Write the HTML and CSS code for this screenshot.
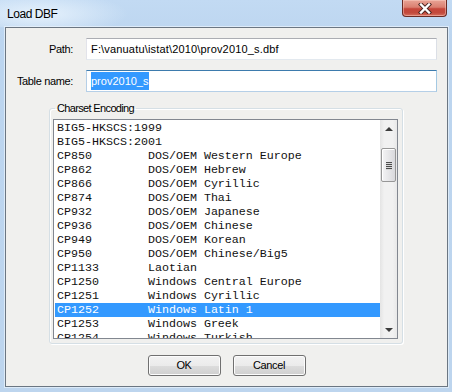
FILE: index.html
```html
<!DOCTYPE html>
<html lang="en">
    <head>
        <meta charset="UTF-8" />
        <title>Load DBF</title>
        <link rel="stylesheet" href="styles.css">
    </head>
    <body>
        <div class="window">
            <div class="titlebar">
                <span class="title">Load DBF</span>
                <div class="close-btn">
                    <svg width="14" height="11" viewBox="0 0 14 11">
                        <path d="M3 1.5 L11 9.5 M11 1.5 L3 9.5" stroke="#4a2420" stroke-width="4.2" stroke-linecap="square" fill="none"/>
                        <path d="M3 1.5 L11 9.5 M11 1.5 L3 9.5" stroke="#ffffff" stroke-width="2.4" stroke-linecap="square" fill="none"/>
                    </svg>
                </div>
            </div>

            <div class="client">
                <div class="form-row">
                    <label class="field-label">Path:</label>
                    <div class="textbox path-text">F:\vanuatu\istat\2010\prov2010_s.dbf</div>
                </div>
                <div class="form-row">
                    <label class="field-label">Table name:</label>
                    <div class="textbox focused"><span class="selected">prov2010_s</span></div>
                </div>

                <fieldset class="group">
                    <legend>Charset Encoding</legend>
                    <div class="listbox">
                        <div class="list-items">
                            <div class="item"><span class="code">BIG5-HKSCS:1999</span></div>
                            <div class="item"><span class="code">BIG5-HKSCS:2001</span></div>
                            <div class="item"><span class="code">CP850</span>DOS/OEM Western Europe</div>
                            <div class="item"><span class="code">CP862</span>DOS/OEM Hebrew</div>
                            <div class="item"><span class="code">CP866</span>DOS/OEM Cyrillic</div>
                            <div class="item"><span class="code">CP874</span>DOS/OEM Thai</div>
                            <div class="item"><span class="code">CP932</span>DOS/OEM Japanese</div>
                            <div class="item"><span class="code">CP936</span>DOS/OEM Chinese</div>
                            <div class="item"><span class="code">CP949</span>DOS/OEM Korean</div>
                            <div class="item"><span class="code">CP950</span>DOS/OEM Chinese/Big5</div>
                            <div class="item"><span class="code">CP1133</span>Laotian</div>
                            <div class="item"><span class="code">CP1250</span>Windows Central Europe</div>
                            <div class="item"><span class="code">CP1251</span>Windows Cyrillic</div>
                            <div class="item active"><span class="code">CP1252</span>Windows Latin 1</div>
                            <div class="item"><span class="code">CP1253</span>Windows Greek</div>
                            <div class="item"><span class="code">CP1254</span>Windows Turkish</div>
                        </div>
                        <div class="scrollbar">
                            <div class="scroll-btn"><span class="arrow-up"></span></div>
                            <div class="scroll-gap"></div>
                            <div class="thumb">
                                <span class="grip"></span>
                                <span class="grip"></span>
                                <span class="grip"></span>
                                <span class="grip"></span>
                            </div>
                            <div class="scroll-rest"></div>
                            <div class="scroll-btn"><span class="arrow-down"></span></div>
                        </div>
                    </div>
                </fieldset>

                <div class="buttons">
                    <div class="btn">OK</div>
                    <div class="btn">Cancel</div>
                </div>
            </div>
        </div>
    </body>
</html>
```

FILE: styles.css
```css
html,
body {
    margin: 0;
    padding: 0;
}

body {
    font-family: 'Liberation Sans', Arial, sans-serif;
    font-size: 11px;
    color: #000;
}

.window {
    width: 452px;
    height: 392px;
    box-sizing: border-box;
    display: flex;
    flex-direction: column;
    background: linear-gradient(to bottom, #c2daf3, #bcd5ef 40px, #bdd5ee);
}

.titlebar {
    height: 27px;
    display: flex;
    align-items: flex-start;
    background: radial-gradient(ellipse 90px 22px at 38px 14px, rgba(232, 243, 253, 0.95), rgba(232, 243, 253, 0));
}

.title {
    font-size: 12px;
    letter-spacing: -0.45px;
    padding: 7px 0 0 7px;
    line-height: 14px;
}

.close-btn {
    margin-left: auto;
    margin-right: 5px;
    width: 45px;
    height: 17px;
    box-sizing: border-box;
    border: 1px solid #6a2b24;
    border-top: none;
    border-radius: 0 0 4px 4px;
    background: linear-gradient(to bottom, #e9a496 0%, #da7f70 45%, #c6463a 55%, #c24a3c 80%, #d8715f 100%);
    box-shadow: inset 0 0 0 1px rgba(255, 215, 205, 0.45);
    display: flex;
    align-items: center;
    justify-content: center;
}

.client {
    flex: 1;
    margin: 0 4px 5px 5px;
    border: 1px solid #6b7682;
    background: #f0f0ee;
    display: flex;
    flex-direction: column;
    padding-top: 10px;
    box-shadow: 0 0 0 1px rgba(235, 243, 252, 0.7);
}

.form-row {
    display: flex;
    align-items: center;
    height: 22px;
    margin-bottom: 10px;
    padding-right: 10px;
}

.field-label {
    width: 67px;
    margin-right: 13px;
    text-align: right;
    letter-spacing: -0.35px;
}

.textbox {
    flex: 1;
    height: 22px;
    box-sizing: border-box;
    border: 1px solid;
    border-color: #abadb3 #dbdfe6 #e3e9ef #e2e3ea;
    background: #fff;
    padding: 0 4px;
    line-height: 20px;
    white-space: nowrap;
}

.path-text {
    letter-spacing: 0.17px;
}

.textbox.focused {
    border-color: #3d7bad #a4c9e3 #b5cfe7 #b5cfe7;
}

.selected {
    display: inline-block;
    background: #3399ff;
    color: #fff;
    line-height: 18px;
    vertical-align: top;
    margin-top: 1px;
}

.group {
    margin: -1px 0 0 43px;
    width: 354px;
    box-sizing: border-box;
    min-width: 0;
    border: 1px solid #d5dfe5;
    border-radius: 3px;
    padding: 4px 4px 4px 3px;
    box-shadow: 1px 1px 0 #fff, inset 1px 1px 0 #fff;
}

.group legend {
    padding: 0 2px;
    margin-left: 2px;
    line-height: 14px;
    letter-spacing: -0.65px;
}

.listbox {
    height: 220px;
    box-sizing: border-box;
    border: 1px solid #828790;
    background: #fff;
    display: flex;
}

.list-items {
    flex: 1;
    overflow: hidden;
    padding: 1px 0 0 1px;
    font-family: 'Liberation Mono', 'Courier New', monospace;
    font-size: 11.67px;
    color: #111;
}

.item {
    height: 14px;
    line-height: 14px;
    padding-left: 2px;
    white-space: pre;
}

.item.active {
    background: #3399ff;
    color: #fff;
}

.code {
    display: inline-block;
    width: 13ch;
}

.scrollbar {
    width: 17px;
    display: flex;
    flex-direction: column;
    background: linear-gradient(to right, #e4e4e4, #f1f1f1 25%, #f1f1f1 75%, #e8e8e8);
}

.scroll-btn {
    height: 17px;
    display: flex;
    align-items: center;
    justify-content: center;
}

.arrow-up {
    width: 0;
    height: 0;
    border-left: 4px solid transparent;
    border-right: 4px solid transparent;
    border-bottom: 4px solid #3c3c3c;
}

.arrow-down {
    width: 0;
    height: 0;
    border-left: 4px solid transparent;
    border-right: 4px solid transparent;
    border-top: 4px solid #3c3c3c;
}

.scroll-gap {
    height: 11px;
}

.thumb {
    height: 34px;
    margin: 0 1px;
    box-sizing: border-box;
    border: 1px solid #979797;
    border-radius: 2px;
    background: linear-gradient(to right, #f4f4f5, #e8e8ea 45%, #d9d9dc);
    box-shadow: inset 1px 1px 0 #fff;
    display: flex;
    flex-direction: column;
    align-items: center;
    justify-content: center;
    gap: 1px;
}

.grip {
    width: 6px;
    height: 1px;
    background: #4d4d4d;
    box-shadow: 0 1px 0 #d8d8d8;
}

.scroll-rest {
    flex: 1;
}

.buttons {
    display: flex;
    justify-content: center;
    gap: 12px;
    margin-top: 11px;
}

.btn {
    width: 73px;
    height: 21px;
    box-sizing: border-box;
    border: 1px solid #707070;
    border-radius: 3px;
    background: linear-gradient(to bottom, #f2f2f2 0%, #ebebeb 50%, #dddddd 51%, #cfcfcf 100%);
    box-shadow: inset 0 0 0 1px #fcfcfc;
    text-align: center;
    line-height: 19px;
    letter-spacing: -0.4px;
}
```
